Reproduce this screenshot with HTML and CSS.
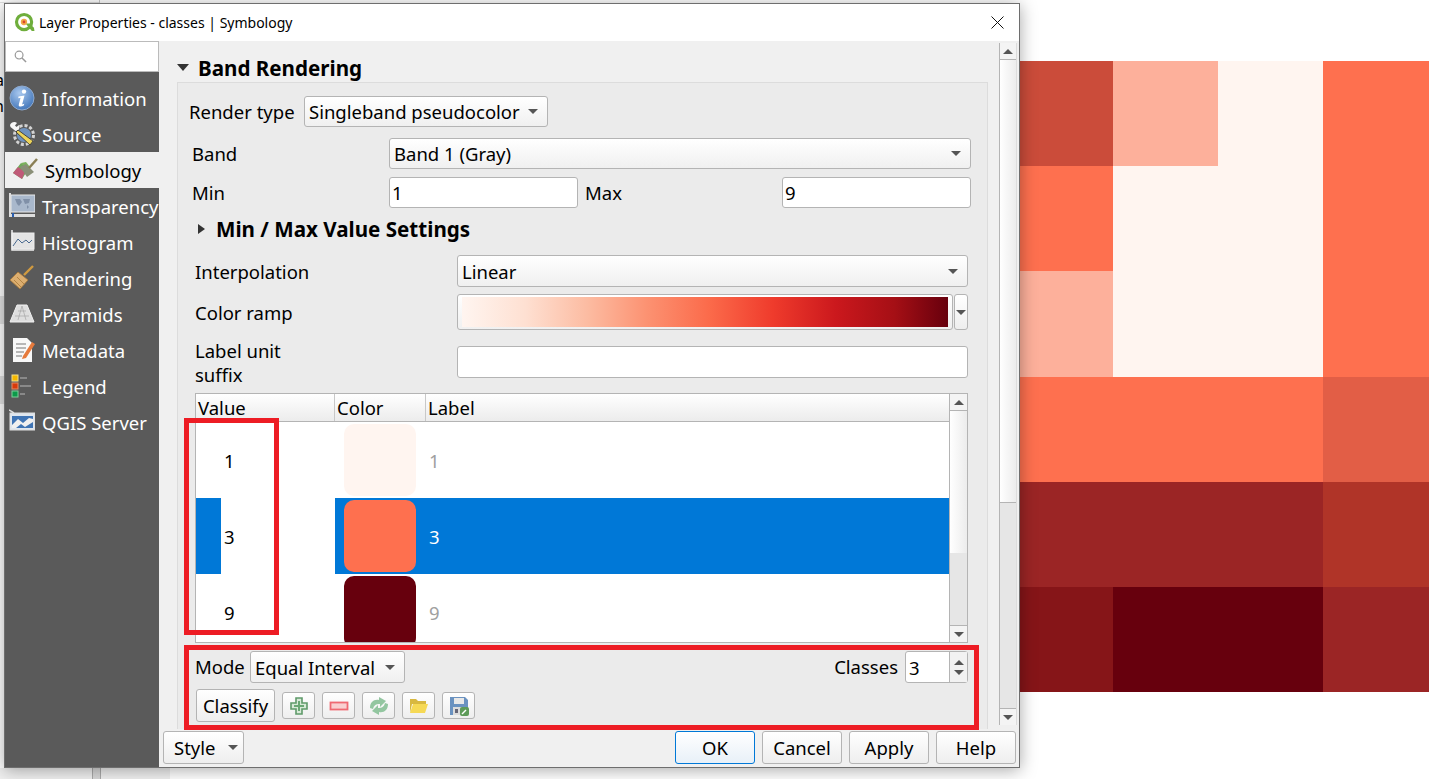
FILE: index.html
```html
<!DOCTYPE html>
<html lang="en">
<head>
    <meta charset="UTF-8">
    <meta name="viewport" content="width=device-width, initial-scale=1.0">
    <title>Layer Properties - classes | Symbology</title>
    <link rel="stylesheet" href="styles.css">
</head>
<body>
    <!-- what is left of the main window behind the dialog -->
    <div class="desk-line desk-top"></div>
    <div class="desk-line desk-vert"></div>
    <div class="desk-strip desk-strip-a"></div>
    <div class="desk-strip desk-strip-b"></div>
    <div class="desk-bottom"></div>
    <div class="desk-foot"></div>
    <span class="frag frag-a">a</span>
    <span class="frag frag-n">n</span>

    <div class="map">
        <div class="c-d"></div><div class="c-b"></div><div class="c-a"></div><div class="c-c"></div>
        <div class="c-c"></div><div class="c-a"></div><div class="c-a"></div><div class="c-c"></div>
        <div class="c-b"></div><div class="c-a"></div><div class="c-a"></div><div class="c-c"></div>
        <div class="c-c"></div><div class="c-c"></div><div class="c-c"></div><div class="c-e"></div>
        <div class="c-g"></div><div class="c-g"></div><div class="c-g"></div><div class="c-f"></div>
        <div class="c-h"></div><div class="c-i"></div><div class="c-i"></div><div class="c-g"></div>
    </div>

    <div class="dialog">
        <div class="titlebar">
            <svg class="app-icon" viewBox="0 0 20 20">
                <circle cx="9.6" cy="9.6" r="7.2" fill="none" stroke="#6fae3c" stroke-width="3"/>
                <path d="M11 11l6 7h2.5l-.5-3-4-4z" fill="#6fae3c"/>
                <circle cx="9.500" cy="9.500" r="3" fill="#f0a848"/>
                <circle cx="9.500" cy="9.500" r="1.300" fill="#d8452c"/>
            </svg>
            <span class="title-text">Layer Properties - classes | Symbology</span>
            <svg class="close-icon" viewBox="0 0 13 13">
                <path d="M.5.5l12 12M12.500.5l-12 12" stroke="#111" stroke-width="1" fill="none"/>
            </svg>
        </div>

        <div class="dialog-body">
            <div class="sidebar">
                <div class="search">
                    <svg viewBox="0 0 14 14" class="search-icon">
                        <circle cx="5.500" cy="5.500" r="4.200" fill="none" stroke="#999" stroke-width="1.300"/>
                        <path d="M8.600 8.600l4.400 4.400" stroke="#999" stroke-width="1.600"/>
                    </svg>
                </div>
                <ul class="nav">
                    <li>
                        <svg class="nav-icon" viewBox="0 0 26 26">
                            <defs>
                                <radialGradient id="infoBlue" cx="40%" cy="30%" r="75%">
                                    <stop offset="0" stop-color="#a9c8ee"/>
                                    <stop offset="1" stop-color="#3e73b8"/>
                                </radialGradient>
                            </defs>
                            <circle cx="13" cy="13" r="12" fill="url(#infoBlue)" stroke="#8fa9cc"/>
                            <circle cx="15" cy="6.600" r="2.200" fill="#fff"/>
                            <path d="M9.500 11.500l6-1-2.400 9 2.200-.8-.5 1.800c-3 1.600-5.600 1.300-5-1l1.800-6.700-2.300.4z" fill="#fff"/>
                        </svg>
                        <span>Information</span>
                    </li>
                    <li>
                        <svg class="nav-icon" viewBox="0 0 26 26">
                            <circle cx="15" cy="14" r="9.500" fill="none" stroke="#d4d4d4" stroke-width="3" stroke-dasharray="3 2"/>
                            <circle cx="15" cy="14" r="7" fill="#6f92bd"/>
                            <path d="M1 4c1-3 5-4 7-2L6 4.500 7.500 6 10 4c1.500 3-.5 6-3.500 6L1.500 6z" fill="#f6f6f6"/>
                            <path d="M9 9l15 11-3 4L7 11z" fill="#ecd35a" stroke="#2c2c2c" stroke-width=".8"/>
                        </svg>
                        <span>Source</span>
                    </li>
                    <li class="active">
                        <svg class="nav-icon" viewBox="0 0 26 26">
                            <path d="M1 16L9 6l8 5-7 11z" fill="#6fa85a"/>
                            <path d="M1 16l5-6 7 5-3 7z" fill="#c05a78"/>
                            <path d="M9 6l5-1 4 5-3 2z" fill="#7cb25e"/>
                            <path d="M8 10l6-3 8 8-7 5z" fill="#8a8f78"/>
                            <path d="M17 11L25 2" stroke="#8a7f55" stroke-width="2.500"/>
                        </svg>
                        <span>Symbology</span>
                    </li>
                    <li>
                        <svg class="nav-icon" viewBox="0 0 26 26">
                            <rect x="2" y="2" width="24" height="17" fill="#a9b8cc" stroke="#e8e8e8"/>
                            <path d="M6 6h5l2 3-3 4-2-2zM14 6h7l-1 4-4 1zM18 12l2 2-2 2z" fill="#8090a8"/>
                            <rect x="0" y="21" width="26" height="3" fill="#ddd"/>
                            <rect x="3" y="20" width="2" height="4" fill="#2a5fb0"/>
                            <rect x="0" y="0" width="2" height="21" fill="#ddd"/>
                        </svg>
                        <span>Transparency</span>
                    </li>
                    <li>
                        <svg class="nav-icon" viewBox="0 0 26 26">
                            <rect x="3" y="4" width="22" height="16" fill="#e4e4e4" stroke="#eee"/>
                            <path d="M3 1v20h22" stroke="#f0f0f0" stroke-width="1.500" fill="none"/>
                            <path d="M4 17l5-7 4 4 4-3 3 3 3-3" stroke="#4a6a90" fill="none"/>
                        </svg>
                        <span>Histogram</span>
                    </li>
                    <li>
                        <svg class="nav-icon" viewBox="0 0 26 26">
                            <path d="M15 10L24 1" stroke="#d09a40" stroke-width="2.400"/>
                            <path d="M1 15l8-8 10 8-8 9z" fill="#dcae70" stroke="#a87838" stroke-width=".8"/>
                            <path d="M5 15l7 7M8 12l7 7" stroke="#a87838" stroke-width=".8"/>
                        </svg>
                        <span>Rendering</span>
                    </li>
                    <li>
                        <svg class="nav-icon" viewBox="0 0 26 26">
                            <path d="M8 4h10l7 17H1z" fill="#dedede" stroke="#f0f0f0"/>
                            <path d="M13 5l-4 14M13 5l4 14M6 15h14M9 10h8" stroke="#a6a6a6" stroke-width=".7"/>
                        </svg>
                        <span>Pyramids</span>
                    </li>
                    <li>
                        <svg class="nav-icon" viewBox="0 0 26 26">
                            <path d="M4 1h14l5 5v19H4z" fill="#f8f8f8"/>
                            <path d="M7 7h10M7 11h10M7 15h8M7 19h6" stroke="#777"/>
                            <path d="M14 19L23 5l3 2-9 14-4 1z" fill="#e67a3c"/>
                        </svg>
                        <span>Metadata</span>
                    </li>
                    <li>
                        <svg class="nav-icon" viewBox="0 0 26 26">
                            <rect x="3" y="2" width="6" height="6" fill="#f6b800" stroke="#f4e08a"/>
                            <rect x="3" y="10" width="6" height="6" fill="#d83a0c" stroke="#e88a60"/>
                            <rect x="3" y="18" width="6" height="6" fill="#0c9a4a" stroke="#7ccf9a"/>
                            <path d="M11 5h7M11 13h11M11 21h5" stroke="#999" stroke-width="1.500"/>
                        </svg>
                        <span>Legend</span>
                    </li>
                    <li>
                        <svg class="nav-icon" viewBox="0 0 26 26">
                            <rect x="1" y="4" width="25" height="17" fill="#dfe6ee" stroke="#ddd"/>
                            <path d="M3 7h21v12H3z" fill="#3f74b4"/>
                            <path d="M3 16l6-6 5 4 6-5 4 1v3l-8 5-4-3-5 4H3z" fill="#f0f0f0"/>
                            <path d="M0 1l5 3" stroke="#ddd" stroke-width="1.500"/>
                        </svg>
                        <span>QGIS Server</span>
                    </li>
                </ul>
            </div>

            <div class="main">
                <div class="scroll-area">
                    <div class="panel">
                        <div class="section-head">
                            <span class="tri-down"></span>
                            <b>Band Rendering</b>
                        </div>
                        <div class="group">
                            <div class="row row-render">
                                <label>Render type</label>
                                <div class="combo combo-render">Singleband pseudocolor<i class="caret"></i></div>
                            </div>
                            <div class="row row-band">
                                <label class="lbl-band">Band</label>
                                <div class="combo combo-band">Band 1 (Gray)<i class="caret"></i></div>
                            </div>
                            <div class="row row-min">
                                <label class="lbl-band">Min</label>
                                <div class="input input-min">1</div>
                                <label class="lbl-max">Max</label>
                                <div class="input input-max">9</div>
                            </div>
                            <div class="row row-minmax">
                                <span class="tri-right"></span>
                                <b>Min / Max Value Settings</b>
                            </div>
                            <div class="row row-interp">
                                <label class="lbl-wide">Interpolation</label>
                                <div class="combo combo-interp">Linear<i class="caret"></i></div>
                            </div>
                            <div class="row row-ramp">
                                <label class="lbl-wide">Color ramp</label>
                                <div class="ramp"><div class="ramp-fill"></div></div>
                                <div class="ramp-menu"><i class="caret"></i></div>
                            </div>
                            <div class="row row-suffix">
                                <label class="lbl-wide">Label unit<br>suffix</label>
                                <div class="input input-suffix"></div>
                            </div>

                            <div class="table">
                                <div class="table-main">
                                    <div class="thead">
                                        <div class="th col-value">Value</div>
                                        <div class="th col-color">Color</div>
                                        <div class="th col-label">Label</div>
                                    </div>
                                    <div class="tbody">
                                        <div class="tr">
                                            <div class="td col-value value-cell">1</div>
                                            <div class="td col-color"><span class="swatch swatch-1"></span></div>
                                            <div class="td col-label muted">1</div>
                                        </div>
                                        <div class="tr selected">
                                            <div class="td col-value value-cell"><span class="sel-stripe"></span>3</div>
                                            <div class="td col-color"><span class="swatch swatch-3"></span></div>
                                            <div class="td col-label">3</div>
                                        </div>
                                        <div class="tr">
                                            <div class="td col-value value-cell">9</div>
                                            <div class="td col-color"><span class="swatch swatch-9"></span></div>
                                            <div class="td col-label muted">9</div>
                                        </div>
                                    </div>
                                </div>
                                <div class="vscroll vscroll-table">
                                    <div class="sb-btn"><i class="caret-up"></i></div>
                                    <div class="sb-thumb"></div>
                                    <div class="sb-track"></div>
                                    <div class="sb-btn sb-btn-down"><i class="caret"></i></div>
                                </div>
                            </div>

                            <div class="row row-mode">
                                <label class="lbl-mode">Mode</label>
                                <div class="combo combo-mode">Equal Interval<i class="caret"></i></div>
                                <label class="lbl-classes">Classes</label>
                                <div class="spin">
                                    <span class="spin-val">3</span>
                                    <span class="spin-btns"><i class="caret-up"></i><i class="caret"></i></span>
                                </div>
                            </div>
                            <div class="row row-tools">
                                <button class="btn btn-classify">Classify</button>
                                <button class="tool">
                                    <svg viewBox="0 0 20 20">
                                        <path d="M7 2h6v5h5v6h-5v5H7v-5H2V7h5z" fill="#d8ead8" stroke="#5f9a6a" stroke-width="1.600"/>
                                        <path d="M10 5v10M5 10h10" stroke="#6aa874" stroke-width="2"/>
                                    </svg>
                                </button>
                                <button class="tool">
                                    <svg viewBox="0 0 20 20"><rect x="1.500" y="6.500" width="17" height="7" fill="#f9d0d0" stroke="#ef6a72" stroke-width="1.800"/></svg>
                                </button>
                                <button class="tool">
                                    <svg viewBox="0 0 20 20">
                                        <path d="M1 12C1 6 5 3 10 4V1l7 4-6 6V8c-4 0-6 1-7 5z" fill="#93c6a0"/>
                                        <path d="M19 8c0 6-4 9-9 8v3l-7-4 6-6v3c4 0 6-1 7-5z" fill="#93c6a0"/>
                                    </svg>
                                </button>
                                <button class="tool">
                                    <svg viewBox="0 0 20 20">
                                        <path d="M1 5V3h6l2 2h8v3H3l-2 9z" fill="#d8b840"/>
                                        <path d="M1 17l3-9h15l-3 9z" fill="#f6d955"/>
                                    </svg>
                                </button>
                                <button class="tool">
                                    <svg viewBox="0 0 20 20">
                                        <path d="M1 1h15l3 3v15H1z" fill="#6a92c0"/>
                                        <rect x="5" y="2" width="10" height="6" fill="#e8e8e8"/>
                                        <rect x="4" y="11" width="10" height="8" fill="#dcdcdc"/>
                                        <rect x="6" y="13" width="3" height="4" fill="#667"/>
                                        <rect x="11" y="11" width="9" height="9" rx="2" fill="#5d9a58"/>
                                        <path d="M13 18l4-4" stroke="#fff" stroke-width="1.500"/>
                                    </svg>
                                </button>
                            </div>
                        </div>
                    </div>
                    <div class="vscroll vscroll-page">
                        <div class="sb-btn"><i class="caret-up"></i></div>
                        <div class="sb-thumb"></div>
                        <div class="sb-track"></div>
                        <div class="sb-btn sb-btn-down"><i class="caret"></i></div>
                    </div>
                </div>

                <div class="footer">
                    <button class="btn btn-style">Style<i class="caret"></i></button>
                    <div class="footer-right">
                        <button class="btn btn-foot btn-ok">OK</button>
                        <button class="btn btn-foot">Cancel</button>
                        <button class="btn btn-foot">Apply</button>
                        <button class="btn btn-foot">Help</button>
                    </div>
                </div>
            </div>
        </div>

        <!-- red marks drawn over the screenshot -->
        <div class="mark mark-values"></div>
        <div class="mark mark-mode"></div>
    </div>
</body>
</html>
```

FILE: styles.css
```css
* {
    box-sizing: border-box;
}
body {
    margin: 0;
    width: 1429px;
    height: 779px;
    overflow: hidden;
    background: #fff;
    font-family: "Noto Sans", sans-serif;
    font-size: 18.5px;
    color: #000;
    position: relative;
}
b {
    font-size: 20.6px;
}

/* desktop behind the dialog */
.desk-line {
    position: absolute;
    background: #c8c8c8;
}
.desk-top {
    left: 0;
    top: 2px;
    width: 100px;
    height: 1px;
    background: #e0e0e0;
}
.desk-vert {
    left: 99px;
    top: 0;
    width: 1px;
    height: 3px;
}
.desk-strip {
    position: absolute;
    left: 0;
    width: 4px;
    background: #e4e4e4;
}
.desk-strip-a {
    top: 296px;
    height: 28px;
}
.desk-strip-b {
    top: 376px;
    height: 28px;
}
.desk-bottom {
    position: absolute;
    left: 0;
    top: 768px;
    width: 170px;
    height: 11px;
    background: #f0f0f0;
}
.desk-foot {
    position: absolute;
    left: 92px;
    top: 768px;
    width: 9px;
    height: 11px;
    background: #d8d8d8;
    border: 1px solid #aaa;
    border-top: none;
    border-bottom: none;
}
/* bits of labels sticking out from under the dialog */
.frag {
    position: absolute;
    font-size: 16px;
    line-height: 16px;
}
.frag-a {
    left: -5px;
    top: 72px;
}
.frag-n {
    left: -6px;
    top: 98px;
}

/* raster layer on the canvas */
.map {
    position: absolute;
    left: 1007px;
    top: 61px;
    display: grid;
    grid-template-columns: 106px 105px 105px 106px;
    grid-template-rows: 105px 105px 106px 105px 105px 105px;
}
.c-a { background: #fff5f0; }
.c-b { background: #fdb09b; }
.c-c { background: #fe704f; }
.c-d { background: #cb4c3a; }
.c-e { background: #e25e46; }
.c-f { background: #b03428; }
.c-g { background: #9b2525; }
.c-h { background: #861518; }
.c-i { background: #67000d; }

/* dialog window */
.dialog {
    position: absolute;
    left: 4px;
    top: 3px;
    width: 1016px;
    height: 765px;
    background: #f0f0f0;
    border: 1px solid #6e6e6e;
    box-shadow: 0 2px 16px rgba(0, 0, 0, 0.35);
    display: flex;
    flex-direction: column;
}
.titlebar {
    height: 37px;
    flex: none;
    background: #fff;
    display: flex;
    align-items: center;
    padding: 0 15px 0 9px;
}
.app-icon {
    width: 21px;
    height: 21px;
    margin-right: 4px;
}
.title-text {
    font-size: 14px;
    flex: 1;
}
.close-icon {
    width: 13px;
    height: 13px;
}
.dialog-body {
    flex: 1;
    display: flex;
    min-height: 0;
}

/* left nav */
.sidebar {
    width: 154px;
    flex: none;
    background: #5a5a5a;
    overflow: hidden;
}
.search {
    height: 31px;
    background: #fff;
    border: 1px solid #bbb;
    display: flex;
    align-items: center;
    padding-left: 8px;
}
.search-icon {
    width: 13px;
    height: 13px;
}
.nav {
    list-style: none;
    margin: 8px 0 0;
    padding: 0;
}
.nav li {
    height: 36px;
    display: flex;
    align-items: center;
    padding-left: 4px;
    color: #fff;
    white-space: nowrap;
}
.nav li.active {
    background: #f0f0f0;
    color: #000;
    padding-left: 7px;
}
.nav-icon {
    width: 26px;
    height: 26px;
    flex: none;
    margin-right: 7px;
}

/* right side */
.main {
    flex: 1;
    min-width: 0;
    display: flex;
    flex-direction: column;
}
.scroll-area {
    height: 688px;
    flex: none;
    display: flex;
}
.panel {
    width: 840px;
    padding: 12px 0 0 18px;
    overflow: hidden;
}
.section-head {
    height: 29px;
    display: flex;
    align-items: center;
    gap: 9px;
}
.tri-down {
    width: 0;
    height: 0;
    border-left: 6px solid transparent;
    border-right: 6px solid transparent;
    border-top: 7px solid #333;
}
.tri-right {
    width: 0;
    height: 0;
    border-top: 5px solid transparent;
    border-bottom: 5px solid transparent;
    border-left: 7px solid #333;
    margin-right: 11px;
}
.group {
    width: 811px;
    height: 650px;
    background: #ebebeb;
    border: 1px solid #dcdcdc;
    padding-top: 13px;
}
.row {
    display: flex;
    align-items: center;
}
label {
    line-height: 24px;
    flex: none;
}
.row-render {
    padding-left: 11px;
    height: 31px;
}
.row-render label {
    width: 115px;
}
.row-band {
    height: 31px;
    margin-top: 11px;
    padding-left: 14px;
}
.lbl-band {
    width: 197px;
    padding-top: 1px;
}
.row-min {
    height: 31px;
    margin-top: 8px;
    padding-left: 14px;
}
.lbl-max {
    width: 197px;
    margin-left: 7px;
}
.row-minmax {
    height: 30px;
    margin-top: 6px;
    padding-left: 20px;
}
.row-interp {
    height: 32px;
    margin-top: 11px;
    padding-left: 17px;
}
.lbl-wide {
    width: 262px;
    padding-top: 2px;
}
.row-ramp {
    height: 36px;
    margin-top: 7px;
    padding-left: 17px;
}
.row-suffix {
    height: 48px;
    margin-top: 9px;
    padding-left: 17px;
}
.row-suffix .lbl-wide {
    padding-top: 0;
}
.row-suffix .input {
    align-self: flex-start;
    margin-top: 7px;
}
.row-mode {
    height: 32px;
    margin-top: 8px;
    padding-left: 17px;
}
.row-tools {
    margin-top: 6px;
    padding-left: 18px;
    height: 33px;
}

/* form controls */
.combo {
    height: 100%;
    padding-left: 4px;
    display: flex;
    align-items: center;
    justify-content: space-between;
    background: linear-gradient(#fff, #f0f0f0);
    border: 1px solid #b4b4b4;
    border-radius: 3px;
    white-space: nowrap;
}
.combo .caret {
    margin-right: 9px;
}
.combo-render { width: 244px; }
.combo-band { width: 582px; }
.combo-interp { width: 511px; }
.combo-mode {
    width: 155px;
    margin-left: 6px;
}
.input {
    height: 100%;
    background: #fff;
    border: 1px solid #b4b4b4;
    border-radius: 3px;
    padding-left: 2px;
    display: flex;
    align-items: center;
}
.input-min { width: 189px; }
.input-max { width: 189px; }
.input-suffix {
    width: 511px;
    height: 32px;
}
.lbl-mode {
    width: 49px;
}
.lbl-classes {
    margin-left: auto;
    margin-right: 7px;
}
.ramp {
    width: 496px;
    height: 36px;
    background: linear-gradient(#fff, #f0f0f0);
    border: 1px solid #b4b4b4;
    border-radius: 3px;
    padding: 2px 4px;
}
.ramp-fill {
    height: 100%;
    background: linear-gradient(to right, #fff5f0, #fee0d2 13%, #fcbba1 26%, #fc9272 38%, #fb6a4a 51%, #ef3b2c 64%, #cb181d 77%, #a50f15 89%, #67000d);
}
.ramp-menu {
    width: 14px;
    height: 36px;
    margin-left: 1px;
    background: linear-gradient(#fff, #eee);
    border: 1px solid #b4b4b4;
    border-radius: 3px;
    display: flex;
    align-items: center;
    justify-content: center;
}
.caret, .caret-up {
    display: block;
    width: 0;
    height: 0;
    border-left: 5px solid transparent;
    border-right: 5px solid transparent;
}
.caret {
    border-top: 5px solid #555;
}
.caret-up {
    border-bottom: 5px solid #555;
}
.spin {
    width: 63px;
    height: 100%;
    display: flex;
    align-items: center;
    background: #fff;
    border: 1px solid #b4b4b4;
    border-radius: 3px;
    margin-right: 19px;
}
.spin-val {
    flex: 1;
    padding-left: 3px;
}
.spin-btns {
    width: 18px;
    height: 100%;
    background: #f2f2f2;
    border-left: 1px solid #b4b4b4;
    display: flex;
    flex-direction: column;
    align-items: center;
    justify-content: center;
    gap: 5px;
}
.btn {
    font: inherit;
    color: #000;
    background: linear-gradient(#fff, #eee);
    border: 1px solid #b4b4b4;
    border-radius: 3px;
    padding: 0;
    height: 33px;
}
.btn-classify {
    width: 79px;
    margin-right: 7px;
}
.tool {
    width: 33px;
    height: 27px;
    margin-right: 7px;
    padding: 0;
    background: linear-gradient(#fff, #eee);
    border: 1px solid #b4b4b4;
    border-radius: 3px;
    display: flex;
    align-items: center;
    justify-content: center;
}
.tool svg {
    width: 20px;
    height: 20px;
}

/* classes table */
.table {
    display: flex;
    width: 773px;
    height: 250px;
    margin: 6px 0 0 17px;
    border: 1px solid #b4b4b4;
    background: #fff;
}
.table-main {
    flex: 1;
    min-width: 0;
    overflow: hidden;
}
.thead {
    display: flex;
    height: 28px;
    background: linear-gradient(#fff, #ececec);
    border-bottom: 1px solid #b4b4b4;
}
.th {
    padding-left: 2px;
    line-height: 28px;
    border-right: 1px solid #c8c8c8;
}
.col-value { width: 139px; flex: none; }
.col-color { width: 91px; flex: none; }
.col-label { flex: 1; border-right: none; }
.tbody {
    height: 220px;
    overflow: hidden;
}
.tr {
    display: flex;
    height: 76px;
}
.td {
    display: flex;
    align-items: center;
}
.value-cell {
    position: relative;
    padding-left: 28px;
}
.col-color.td {
    padding-left: 9px;
}
.td.col-label {
    padding-left: 3px;
}
.muted {
    color: #a0a0a0;
}
.swatch {
    display: block;
    width: 72px;
    height: 72px;
    border-radius: 10px;
}
.swatch-1 { background: #fff5f0; }
.swatch-3 { background: #fe704f; }
.swatch-9 { background: #67000d; }
.tr.selected .col-color,
.tr.selected .col-label {
    background: #0078d7;
    color: #fff;
}
.sel-stripe {
    position: absolute;
    left: 0;
    top: 0;
    width: 25px;
    height: 100%;
    background: #0078d7;
}

/* scrollbars */
.vscroll {
    width: 18px;
    flex: none;
    display: flex;
    flex-direction: column;
    border-left: 1px solid #b4b4b4;
}
.sb-btn {
    height: 17px;
    flex: none;
    background: #f4f4f4;
    border-bottom: 1px solid #b4b4b4;
    display: flex;
    align-items: center;
    justify-content: center;
}
.sb-btn-down {
    border-bottom: none;
    border-top: 1px solid #b4b4b4;
}
.sb-thumb {
    background: linear-gradient(to right, #fff, #ececec);
}
.sb-track {
    flex: 1;
    background: #e6e6e6;
}
.vscroll-table .sb-thumb {
    height: 142px;
}
.vscroll-page {
    height: 682px;
    margin: 2px 0 0 0;
    border-right: 1px solid #dcdcdc;
}
.vscroll-page .sb-thumb {
    height: 443px;
    border-bottom: 1px solid #b4b4b4;
}

/* bottom buttons */
.footer {
    flex: 1;
    display: flex;
    align-items: flex-start;
    justify-content: space-between;
    padding: 2px 3px 0 4px;
}
.btn-style {
    width: 81px;
    display: flex;
    align-items: center;
    justify-content: space-between;
    padding: 0 5px 0 10px;
}
.footer-right {
    display: flex;
    gap: 7px;
}
.btn-foot {
    width: 80px;
}
.btn-ok {
    background: linear-gradient(#fff, #e8f0f8);
    border-color: #0078d7;
}

/* annotations */
.mark {
    position: absolute;
    border: 5px solid #ed1c24;
    pointer-events: none;
}
.mark-values {
    left: 179px;
    top: 414px;
    width: 95px;
    height: 217px;
}
.mark-mode {
    left: 179px;
    top: 641px;
    width: 795px;
    height: 85px;
}
```
